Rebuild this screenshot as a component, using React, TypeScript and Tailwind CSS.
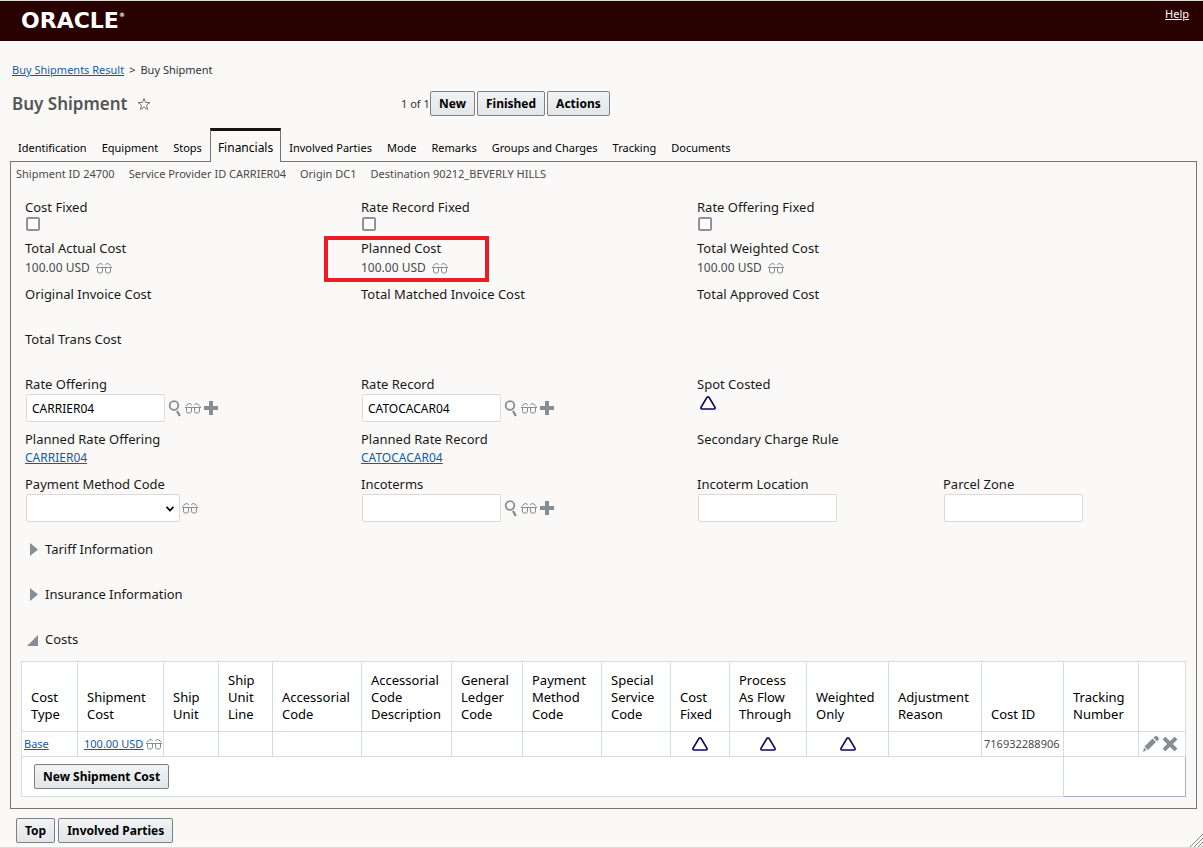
import type { ReactNode } from 'react';

const tabs = [
  'Identification',
  'Equipment',
  'Stops',
  'Financials',
  'Involved Parties',
  'Mode',
  'Remarks',
  'Groups and Charges',
  'Tracking',
  'Documents',
];

const summary = [
  'Shipment ID 24700',
  'Service Provider ID CARRIER04',
  'Origin DC1',
  'Destination 90212_BEVERLY HILLS',
];

const columns = [
  { title: 'Cost Type', width: 'w-[56px]' },
  { title: 'Shipment Cost', width: 'w-[86px]' },
  { title: 'Ship Unit', width: 'w-[55px]' },
  { title: 'Ship Unit Line', width: 'w-[54px]' },
  { title: 'Accessorial Code', width: 'w-[89px]' },
  { title: 'Accessorial Code Description', width: 'w-[90px]' },
  { title: 'General Ledger Code', width: 'w-[71px]' },
  { title: 'Payment Method Code', width: 'w-[79px]' },
  { title: 'Special Service Code', width: 'w-[69px]' },
  { title: 'Cost Fixed', width: 'w-[59px]' },
  { title: 'Process As Flow Through', width: 'w-[77px]' },
  { title: 'Weighted Only', width: 'w-[82px]' },
  { title: 'Adjustment Reason', width: 'w-[93px]' },
  { title: 'Cost ID', width: 'w-[82px]' },
  { title: 'Tracking Number', width: 'w-[75px]' },
  { title: '', width: 'w-[47px]' },
];

const Glasses = () => (
  <svg width="16" height="12" viewBox="0 0 16 12" fill="none" stroke="#878e93" className="shrink-0">
    <path d="M0 5.5h16M.8 4.500L3 2l2-.500 1.800 1.300M15.200 4.500L13 2l-2-.500-1.800 1.300" />
    <path d="M1.500 5.500v3.500q0 2 1.500 2h2q1.500 0 1.500-2V5.500M9.500 5.500v3.500q0 2 1.500 2h2q1.500 0 1.500-2V5.500" />
  </svg>
);

const Search = () => (
  <svg width="14" height="17" viewBox="0 0 14 17" fill="none" stroke="#878e93" className="shrink-0">
    <circle cx="6" cy="5.500" r="4.300" strokeWidth="1.800" />
    <path d="M9 11l2.800 5" strokeWidth="2.400" />
  </svg>
);

const Plus = () => (
  <svg width="14" height="14" viewBox="0 0 14 14" fill="#878e93" className="shrink-0">
    <path d="M5 0h4v5h5v4H9v5H5V9H0V5h5z" />
  </svg>
);

const Triangle = () => (
  <svg width="16" height="14" viewBox="0 0 16 14" fill="#fff" stroke="#0a0660" className="inline-block">
    <path d="M7 1.300q1-1 2 0l6 10q.4 1.700-1 1.700H2q-1.400 0-1-1.700z" strokeWidth="1.600" />
  </svg>
);

const Pencil = () => (
  <svg width="16" height="16" viewBox="0 0 16 16" fill="#878e93">
    <path d="M0 16l1-4.500L3.500 14zM1.500 10.500L9.500 2.500 13 6 5 14zM10.500 1.800l1.500-1.500q1-1 2 0L15.500 1.800q1 1 0 2L14 5.300z" />
  </svg>
);

const Cross = () => (
  <svg width="16" height="14" viewBox="0 0 16 14" fill="none" stroke="#878e93" strokeWidth="4">
    <path d="M2 1l12 12M14 1L2 13" />
  </svg>
);

const Button = ({ children }: { children: ReactNode }) => (
  <button
    type="button"
    className="h-[25px] rounded-[2px] border border-[#7d8184] bg-gradient-to-b from-[#f1f3f4] to-[#e2e6e9] px-2 text-[12px] font-bold leading-4 text-black"
  >
    {children}
  </button>
);

const Link = ({ children }: { children: ReactNode }) => (
  <a href="#" className="text-[#145c9e] underline">
    {children}
  </a>
);

const Label = ({ htmlFor, children }: { htmlFor?: string; children: ReactNode }) =>
  htmlFor ? (
    <label htmlFor={htmlFor} className="block">
      {children}
    </label>
  ) : (
    <div>{children}</div>
  );

const CheckField = ({ id, label }: { id: string; label: string }) => (
  <div>
    <Label htmlFor={id}>{label}</Label>
    <input
      id={id}
      type="checkbox"
      className="ml-px mt-px block size-[14px] appearance-none rounded-[2px] border-2 border-[#8f8f9d] bg-white"
    />
  </div>
);

const CostField = ({ label, marked }: { label: string; marked?: boolean }) => (
  <div className="relative">
    <Label>{label}</Label>
    <div className="mt-[2px] flex items-center gap-[6px] text-[12px] text-[#4a4a4a]">
      100.00 USD <Glasses />
    </div>
    {marked && <div className="absolute -left-[37px] -top-[3px] h-[46px] w-[165px] border-4 border-[#ed1c24]" />}
  </div>
);

const TextField = ({ id, label, value, lookup }: { id: string; label: string; value?: string; lookup?: boolean }) => (
  <div>
    <Label htmlFor={id}>{label}</Label>
    <div className="mt-px flex items-center">
      <input
        id={id}
        defaultValue={value}
        className="ml-px h-[28px] w-[139px] rounded-[2px] border border-[#dadada] bg-white px-[5px] text-[12px] text-black"
      />
      {lookup && (
        <div className="ml-[3px] flex items-center gap-[3px]">
          <Search />
          <Glasses />
          <Plus />
        </div>
      )}
    </div>
  </div>
);

const LinkField = ({ label, value }: { label: string; value: string }) => (
  <div>
    <Label>{label}</Label>
    <div className="mt-px text-[12px]">
      <Link>{value}</Link>
    </div>
  </div>
);

const Row = ({ height, children }: { height: string; children: ReactNode }) => (
  <div className={`grid grid-cols-[336fr_336fr_246fr_243fr] ${height}`}>{children}</div>
);

const Section = ({ title, open }: { title: string; open?: boolean }) => (
  <h2 className="h-[45px]">
    <button type="button" aria-expanded={!!open} className="flex items-center gap-[7px]">
      <svg width="13" height="13" viewBox="0 0 13 13" fill="#878e93">
        {open ? <path d="M13 2v11H2z" /> : <path d="M5 0l8 6.500L5 13z" />}
      </svg>
      {title}
    </button>
  </h2>
);

const CostsTable = () => (
  <table className="w-full table-fixed border-collapse border border-[#d3dde4] bg-white text-black">
    <colgroup>
      {columns.map((col, i) => (
        <col key={i} className={col.width} />
      ))}
    </colgroup>
    <thead>
      <tr className="h-[70px]">
        {columns.map((col, i) => (
          <th
            key={i}
            className="border border-[#d3dde4] pb-2 pl-[9px] pr-2 text-left align-bottom text-[13px] font-normal leading-[17px]"
          >
            {col.title}
          </th>
        ))}
      </tr>
    </thead>
    <tbody>
      <tr className="h-[25px] text-[11px] leading-[18px] [&>td]:border [&>td]:border-[#d3dde4]">
        <td className="pl-[2px]">
          <Link>Base</Link>
        </td>
        <td className="pl-[6px]">
          <div className="flex items-center gap-[3px] whitespace-nowrap">
            <Link>100.00 USD</Link> <Glasses />
          </div>
        </td>
        <td />
        <td />
        <td />
        <td />
        <td />
        <td />
        <td />
        <td className="text-center leading-none">
          <Triangle />
        </td>
        <td className="text-center leading-none">
          <Triangle />
        </td>
        <td className="text-center leading-none">
          <Triangle />
        </td>
        <td />
        <td className="pl-[2px] text-[#4a4a4a]">716932288906</td>
        <td />
        <td>
          <div className="flex items-center gap-[3px] pl-1">
            <button type="button" aria-label="Edit">
              <Pencil />
            </button>
            <button type="button" aria-label="Delete">
              <Cross />
            </button>
          </div>
        </td>
      </tr>
      <tr className="h-[40px]">
        <td colSpan={14} className="border border-[#d3dde4] pl-3">
          <Button>New Shipment Cost</Button>
        </td>
        <td colSpan={2} className="border border-[#a3b1d8] border-l-[#d3dde4] border-t-[#d3dde4]" />
      </tr>
    </tbody>
  </table>
);

export default function App() {
  return (
    <div className="flex min-h-screen flex-col border-b border-[#dcdcdc] bg-[#faf9f8] font-['Noto_Sans',sans-serif] text-[13px] leading-[18px] text-[#1a1816]">
      <header className="flex h-[41px] items-center justify-between border-t border-[#dcdcdc] bg-[#280000] pl-[21px] pr-[14px] text-white">
        <div className="flex items-start font-['DejaVu_Sans',sans-serif] text-[22px] font-bold leading-6">
          ORACLE<span className="text-[6px] leading-3">®</span>
        </div>
        <a href="#" className="self-start pt-1 text-[11px] underline">
          Help
        </a>
      </header>

      <nav className="mt-5 flex gap-[5px] pl-3 text-[11px] text-[#333]">
        <Link>Buy Shipments Result</Link>
        <span>&gt;</span>
        <span>Buy Shipment</span>
      </nav>

      <div className="mt-3 flex h-[25px] items-center">
        <div className="flex w-[389px] items-center gap-[10px] pl-3">
          <h1 className="text-[17px] font-semibold text-[#555]">Buy Shipment</h1>
          <svg width="14" height="14" viewBox="0 0 14 14" fill="none" stroke="#777">
            <path d="M7 1.500l1.500 4H13L9.400 8.200l1.300 4.300L7 10l-3.700 2.500 1.300-4.300L1 5.500h4.500z" />
          </svg>
        </div>
        <div className="flex items-center pl-3 text-[11px] text-[#333]">
          <span className="w-[29px] whitespace-nowrap">1 of 1</span>
          <div className="flex gap-[2px]">
            <Button>New</Button>
            <Button>Finished</Button>
            <Button>Actions</Button>
          </div>
        </div>
      </div>

      <div className="mt-[11px] flex h-[34px] items-end gap-px pl-[11px] text-[11px] text-black">
        {tabs.map((tab) =>
          tab === 'Financials' ? (
            <a
              key={tab}
              href="#"
              className="relative -mb-px h-[34px] border-x border-t-[3px] border-x-[#757575] border-t-[#161513] bg-[#faf9f8] px-[7px] pt-2 text-[12px]"
            >
              {tab}
            </a>
          ) : (
            <a key={tab} href="#" className="px-[7px] pb-1">
              {tab}
            </a>
          ),
        )}
      </div>

      <main className="ml-[10px] mr-[6px] border border-[#757575] px-[10px] pb-[11px]">
        <div className="-ml-[5px] mt-[3px] flex gap-[14px] text-[11px] text-[#4a4a4a]">
          {summary.map((item) => (
            <span key={item}>{item}</span>
          ))}
        </div>

        <div className="mt-[15px] pl-1">
          <Row height="h-[41px]">
            <CheckField id="cost-fixed" label="Cost Fixed" />
            <CheckField id="rate-record-fixed" label="Rate Record Fixed" />
            <CheckField id="rate-offering-fixed" label="Rate Offering Fixed" />
          </Row>
          <Row height="h-[46px]">
            <CostField label="Total Actual Cost" />
            <CostField label="Planned Cost" marked />
            <CostField label="Total Weighted Cost" />
          </Row>
          <Row height="h-[45px]">
            <Label>Original Invoice Cost</Label>
            <Label>Total Matched Invoice Cost</Label>
            <Label>Total Approved Cost</Label>
          </Row>
          <Row height="h-[45px]">
            <Label>Total Trans Cost</Label>
          </Row>
          <Row height="h-[55px]">
            <TextField id="rate-offering" label="Rate Offering" value="CARRIER04" lookup />
            <TextField id="rate-record" label="Rate Record" value="CATOCACAR04" lookup />
            <div>
              <Label>Spot Costed</Label>
              <div className="ml-[3px] mt-[2px] leading-none">
                <Triangle />
              </div>
            </div>
          </Row>
          <Row height="h-[45px]">
            <LinkField label="Planned Rate Offering" value="CARRIER04" />
            <LinkField label="Planned Rate Record" value="CATOCACAR04" />
            <Label>Secondary Charge Rule</Label>
          </Row>
          <Row height="h-[65px]">
            <div>
              <Label htmlFor="payment-method">Payment Method Code</Label>
              <div className="mt-px flex items-center gap-[2px]">
                <div className="relative ml-px">
                  <select
                    id="payment-method"
                    className="block h-[28px] w-[154px] appearance-none rounded-[2px] border border-[#dadada] bg-white px-[5px] text-[12px]"
                  >
                    <option></option>
                  </select>
                  <svg
                    width="8"
                    height="6"
                    viewBox="0 0 8 6"
                    fill="none"
                    stroke="#000"
                    strokeWidth="1.800"
                    className="pointer-events-none absolute right-[6px] top-[12px]"
                  >
                    <path d="M.5.800L4 4.500 7.500.800" />
                  </svg>
                </div>
                <Glasses />
              </div>
            </div>
            <TextField id="incoterms" label="Incoterms" lookup />
            <TextField id="incoterm-location" label="Incoterm Location" />
            <TextField id="parcel-zone" label="Parcel Zone" />
          </Row>
          <Section title="Tariff Information" />
          <Section title="Insurance Information" />
        </div>
        <div className="-mb-[14px] pl-1">
          <Section title="Costs" open />
        </div>
        <CostsTable />
      </main>

      <footer className="mt-[9px] flex items-end justify-between pl-4">
        <div className="flex gap-[3px] pb-1">
          <Button>Top</Button>
          <Button>Involved Parties</Button>
        </div>
        <svg width="13" height="14" viewBox="0 0 13 14" stroke="#8a8a8a" strokeWidth="1">
          <path d="M0 14L13 1M4 14l9-9M8 14l5-5M11.500 14L13 12.500" />
        </svg>
      </footer>
    </div>
  );
}
